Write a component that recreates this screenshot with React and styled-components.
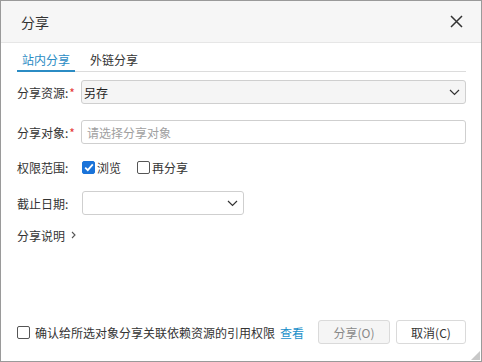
import styled, { createGlobalStyle } from "styled-components";

const Global = createGlobalStyle`
  html, body {
    margin: 0;
    padding: 0;
    background: #3a3a3a;
  }
  * { box-sizing: border-box; }
`

const Dialog = styled.div`
  position: relative;
  width: 482px;
  height: 362px;
  background: #fff;
  border: 1px solid #9a9a9a;
  display: flex;
  flex-direction: column;
  font-family: "Noto Sans CJK SC", "Noto Sans", sans-serif;
  font-size: 12px;
  color: #333;
`

const Header = styled.div`
  height: 42px;
  flex: none;
  background: #f6f6f6;
  border-bottom: 1px solid #e6e6e6;
  display: flex;
  align-items: center;
  justify-content: space-between;
  padding: 0 18px 0 20px;
`

const Title = styled.div`
  font-size: 14px;
  color: #333;
`

const Close = styled.svg`
  width: 13px;
  height: 13px;
`

const Body = styled.div`
  flex: 1;
  display: flex;
  flex-direction: column;
  padding: 0 15px 0 16px;
`

const Tabs = styled.div`
  display: flex;
  gap: 10px;
  border-bottom: 1px solid #dcdcdc;
  margin-top: 6px;
`

const Tab = styled.div`
  padding: 0 5px;
  height: 23px;
  line-height: 22px;
  color: ${({ active }) => (active ? "#2b8cc4" : "#333")};
  border-bottom: 2px solid ${({ active }) => (active ? "#2b8cc4" : "transparent")};
  margin-bottom: -1px;
`

const Row = styled.div`
  display: flex;
  align-items: center;
  height: 24px;
  margin-top: ${({ top }) => top}px;
`

const Label = styled.div`
  width: 64px;
  flex: none;
  color: #333;
  white-space: nowrap;
`

const Star = styled.span`
  color: #e53935;
  margin-left: 1px;
`

const Select = styled.div`
  width: ${({ w }) => w || "385px"};
  height: 24px;
  border: 1px solid #cfcfcf;
  border-radius: 3px;
  background: ${({ filled }) => (filled ? "#f5f5f5" : "#fff")};
  display: flex;
  align-items: center;
  justify-content: space-between;
  padding: 0 5px 0 2px;
  color: #222;
  margin-left: ${({ offset }) => offset || 0}px;
`

const Input = styled.div`
  width: 385px;
  height: 24px;
  border: 1px solid #cfcfcf;
  border-radius: 3px;
  background: #fff;
  display: flex;
  align-items: center;
  padding: 0 5px;
  color: #a0a0a0;
`

const Chevron = styled.svg`
  width: 11px;
  height: 7px;
`

const Check = styled.span`
  width: 13px;
  height: 13px;
  border-radius: 2px;
  flex: none;
  display: inline-flex;
  align-items: center;
  justify-content: center;
  border: 1px solid ${({ checked }) => (checked ? "#1a73d9" : "#555")};
  background: ${({ checked }) => (checked ? "#1a73d9" : "#fff")};
`

const CheckItem = styled.label`
  display: flex;
  align-items: center;
  gap: 2px;
  margin-left: ${({ offset }) => offset}px;
  color: #333;
`

const More = styled.div`
  display: flex;
  align-items: center;
  gap: 6px;
  color: #333;
`

const Footer = styled.div`
  margin-top: auto;
  display: flex;
  align-items: center;
  padding: 0 15px 17px 16px;
  height: 24px;
  box-sizing: content-box;
`

const Confirm = styled.div`
  display: flex;
  align-items: center;
  gap: 5px;
  flex: 1;
  color: #333;
`

const Link = styled.span`
  color: #1a8fc9;
`

const Button = styled.button`
  height: 24px;
  width: ${({ w }) => w}px;
  border: 1px solid #dadada;
  border-radius: 3px;
  background: ${({ disabled }) => (disabled ? "#f5f5f5" : "#fff")};
  color: ${({ disabled }) => (disabled ? "#888" : "#333")};
  font-family: inherit;
  font-size: 12px;
  margin-left: 6px;
  padding: 0;
`

const Grip = styled.div`
  position: absolute;
  right: 1px;
  bottom: 1px;
  width: 0;
  height: 0;
  border-left: 9px solid transparent;
  border-bottom: 9px solid #c8c8c8;
`

const Down = () => (
  <Chevron viewBox="0 0 11 7">
    <path d="M1 1 L5.5 5.5 L10 1" fill="none" stroke="#333" strokeWidth="1.2" />
  </Chevron>
);

const Tick = () => (
  <svg width="10" height="9" viewBox="0 0 10 9">
    <path d="M1.2 4.6 L3.8 7.2 L8.8 1.4" fill="none" stroke="#fff" strokeWidth="1.8" />
  </svg>
);

const App = () => (
  <>
    <Global />
    <Dialog>
      <Header>
        <Title>分享</Title>
        <Close viewBox="0 0 13 13">
          <path d="M1 1 L12 12 M12 1 L1 12" stroke="#333" strokeWidth="1.5" />
        </Close>
      </Header>
      <Body>
        <Tabs>
          <Tab active>站内分享</Tab>
          <Tab>外链分享</Tab>
        </Tabs>
        <Row top={8}>
          <Label>分享资源:<Star>*</Star></Label>
          <Select filled>
            <span>另存</span>
            <Down />
          </Select>
        </Row>
        <Row top={16}>
          <Label>分享对象:<Star>*</Star></Label>
          <Input>请选择分享对象</Input>
        </Row>
        <Row top={11}>
          <Label>权限范围:</Label>
          <CheckItem offset={1}>
            <Check checked><Tick /></Check>
            浏览
          </CheckItem>
          <CheckItem offset={16}>
            <Check />
            再分享
          </CheckItem>
        </Row>
        <Row top={12}>
          <Label>截止日期:</Label>
          <Select w="162px" offset={1}>
            <span />
            <Down />
          </Select>
        </Row>
        <Row top={8}>
          <More>
            分享说明
            <svg width="5" height="8" viewBox="0 0 5 8">
              <path d="M1 1 L4 4 L1 7" fill="none" stroke="#555" strokeWidth="1.1" />
            </svg>
          </More>
        </Row>
      </Body>
      <Footer>
        <Confirm>
          <Check />
          确认给所选对象分享关联依赖资源的引用权限
          <Link>查看</Link>
        </Confirm>
        <Button w={72} disabled>分享(O)</Button>
        <Button w={70}>取消(C)</Button>
      </Footer>
      <Grip />
    </Dialog>
  </>
);

export default App;
